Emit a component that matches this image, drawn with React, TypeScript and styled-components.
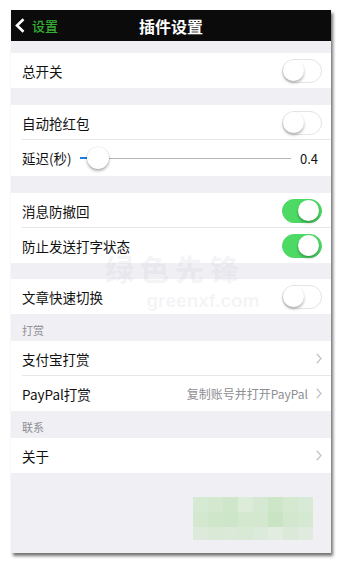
import React from 'react';
import styled, { createGlobalStyle } from 'styled-components';

const GlobalStyle = createGlobalStyle`
  html, body {
    margin: 0;
    padding: 0;
    background: #ffffff;
  }
  body {
    font-family: "Noto Sans CJK SC", "Noto Sans", "Liberation Sans", sans-serif;
  }
`;

const Page = styled.div`
  width: 342px;
  height: 565px;
  padding: 10px 0 0 11px;
  box-sizing: border-box;
  overflow: hidden;
`;

const Phone = styled.div`
  position: relative;
  width: 320px;
  height: 543px;
  background: #efeff4;
  display: flex;
  flex-direction: column;
  box-shadow: 2px 3px 3px rgba(0, 0, 0, 0.55);
  overflow: hidden;
`;

const NavBar = styled.div`
  height: 31px;
  background: #0b0b0b;
  display: grid;
  grid-template-columns: 1fr auto 1fr;
  align-items: center;
  padding: 0 4px;
  flex-shrink: 0;
`;

const BackButton = styled.div`
  display: flex;
  align-items: center;
  gap: 7px;
  color: #35b035;
  font-size: 13px;
  font-weight: 500;
`;

const Title = styled.div`
  color: #ffffff;
  font-size: 16px;
  font-weight: 700;
`;

const Gap = styled.div<{ $h: number }>`
  height: ${(p) => p.$h}px;
  flex-shrink: 0;
`;

const SectionHeader = styled.div`
  height: 27px;
  box-sizing: border-box;
  padding: 8px 0 0 11px;
  font-size: 11px;
  color: #8e8e93;
  flex-shrink: 0;
`;

const Group = styled.div`
  background: #ffffff;
  flex-shrink: 0;
`;

const Row = styled.div<{ $last?: boolean }>`
  position: relative;
  height: 35px;
  display: flex;
  align-items: center;
  padding: 0 9px 0 11px;
  box-sizing: border-box;
  &::after {
    content: '';
    display: ${(p) => (p.$last ? 'none' : 'block')};
    position: absolute;
    left: 11px;
    right: 0;
    bottom: 0;
    height: 1px;
    background: #e6e6ea;
  }
`;

const Label = styled.div`
  flex: 1;
  font-size: 13.5px;
  color: #111111;
  white-space: nowrap;
`;

const Detail = styled.div`
  font-size: 12px;
  color: #8e8e93;
  margin-right: 8px;
`;

const SwitchTrack = styled.div<{ $on: boolean }>`
  position: relative;
  width: 40px;
  height: 24px;
  border-radius: 12px;
  box-sizing: border-box;
  background: ${(p) => (p.$on ? '#4cd964' : '#ffffff')};
  border: 1.5px solid ${(p) => (p.$on ? '#4cd964' : '#e4e4e8')};
`;

const SwitchKnob = styled.div<{ $on: boolean }>`
  position: absolute;
  top: 0;
  left: ${(p) => (p.$on ? '15px' : '0')};
  width: 21px;
  height: 21px;
  border-radius: 50%;
  background: #ffffff;
  box-shadow: 0 2px 3px rgba(0, 0, 0, 0.3);
`;

const SliderRow = styled(Row)`
  height: 36px;
  padding-right: 13px;
`;

const SliderLabel = styled.div`
  font-size: 13.5px;
  color: #111111;
  margin-right: 8px;
`;

const SliderTrack = styled.div`
  position: relative;
  flex: 1;
  height: 1px;
  background: #b5b5b5;
  margin-right: 9px;
`;

const SliderFill = styled.div`
  position: absolute;
  left: 0;
  top: -0.5px;
  height: 2px;
  background: #1a7ee6;
`;

const SliderThumb = styled.div`
  position: absolute;
  top: -11px;
  width: 22px;
  height: 22px;
  margin-left: -11px;
  border-radius: 50%;
  background: #ffffff;
  box-shadow: 0 2px 3px rgba(0, 0, 0, 0.3), 0 0 0 0.5px rgba(0, 0, 0, 0.08);
`;

const SliderValue = styled.div`
  font-size: 13px;
  color: #111111;
`;

const Filler = styled.div`
  flex: 1;
  display: flex;
  justify-content: flex-end;
  padding: 24px 18px 0 0;
`;

const Mosaic = styled.div`
  display: grid;
  grid-template-columns: repeat(8, 15px);
  grid-template-rows: 15px 15px 13px;
  align-self: flex-start;
`;

const MosaicCell = styled.div<{ $c: string }>`
  background: ${(p) => p.$c};
`;

/* faint site watermark printed over the screenshot */
const Watermark = styled.div`
  position: absolute;
  left: 84px;
  top: 245px;
  width: 160px;
  display: flex;
  flex-direction: column;
  align-items: center;
  pointer-events: none;
  color: rgba(205, 205, 214, 0.22);
  font-weight: 700;
`;

const WatermarkBig = styled.div`
  font-size: 29px;
  line-height: 26px;
  height: 26px;
  letter-spacing: 6px;
`;

const WatermarkSmall = styled.div`
  font-family: "Liberation Sans", sans-serif;
  font-size: 19px;
  line-height: 16px;
  height: 16px;
  margin: 12px 0 0 56px;
`;

const Chevron = () => (
  <svg width="6" height="11" viewBox="0 0 6 11">
    <polyline points="0.8,0.8 5,5.5 0.8,10.2" fill="none" stroke="#c4c4c9" strokeWidth="1.3" />
  </svg>
);

const BackChevron = () => (
  <svg width="10" height="15" viewBox="0 0 10 15">
    <polyline points="8.5,1.2 2,7.5 8.5,13.8" fill="none" stroke="#ffffff" strokeWidth="2.6" />
  </svg>
);

const Switch = ({ on }: { on: boolean }) => (
  <SwitchTrack $on={on}>
    <SwitchKnob $on={on} />
  </SwitchTrack>
);

const mosaicColors = [
  '#d6e9d2', '#d3e8cf', '#cfe6ca', '#dcecd9', '#d5e8d1', '#cde6c8', '#d5e9d1', '#d8ead5',
  '#d4e8d0', '#d0e6cb', '#cde5c8', '#d4e8d0', '#d3e8cf', '#c8e4c2', '#d2e7ce', '#d5e8d1',
  '#dde9db', '#d9e9d6', '#dbe9d8', '#d8e9d5', '#dceadb', '#e2ece1', '#dbe9d8', '#e0eade',
];

export default function App() {
  const delay = 0.4;
  const thumbPct = 8.5;

  return (
    <>
      <GlobalStyle />
      <Page>
        <Phone>
          <NavBar>
            <BackButton>
              <BackChevron />
              <span>设置</span>
            </BackButton>
            <Title>插件设置</Title>
            <div />
          </NavBar>

          <Gap $h={12} />
          <Group>
            <Row $last>
              <Label>总开关</Label>
              <Switch on={false} />
            </Row>
          </Group>

          <Gap $h={17} />
          <Group>
            <Row>
              <Label>自动抢红包</Label>
              <Switch on={false} />
            </Row>
            <SliderRow $last>
              <SliderLabel>延迟(秒)</SliderLabel>
              <SliderTrack>
                <SliderFill style={{ width: `${thumbPct}%` }} />
                <SliderThumb style={{ left: `${thumbPct}%` }} />
              </SliderTrack>
              <SliderValue>{delay}</SliderValue>
            </SliderRow>
          </Group>

          <Gap $h={17} />
          <Group>
            <Row>
              <Label>消息防撤回</Label>
              <Switch on />
            </Row>
            <Row $last>
              <Label>防止发送打字状态</Label>
              <Switch on />
            </Row>
          </Group>

          <Gap $h={16} />
          <Group>
            <Row $last>
              <Label>文章快速切换</Label>
              <Switch on={false} />
            </Row>
          </Group>

          <SectionHeader>打赏</SectionHeader>
          <Group>
            <Row>
              <Label>支付宝打赏</Label>
              <Chevron />
            </Row>
            <Row $last>
              <Label>PayPal打赏</Label>
              <Detail>复制账号并打开PayPal</Detail>
              <Chevron />
            </Row>
          </Group>

          <SectionHeader>联系</SectionHeader>
          <Group>
            <Row $last>
              <Label>关于</Label>
              <Chevron />
            </Row>
          </Group>

          <Filler>
            <Mosaic>
              {mosaicColors.map((c, i) => (
                <MosaicCell key={i} $c={c} />
              ))}
            </Mosaic>
          </Filler>

          <Watermark>
            <WatermarkBig>绿色先锋</WatermarkBig>
            <WatermarkSmall>greenxf.com</WatermarkSmall>
          </Watermark>
        </Phone>
      </Page>
    </>
  );
}
